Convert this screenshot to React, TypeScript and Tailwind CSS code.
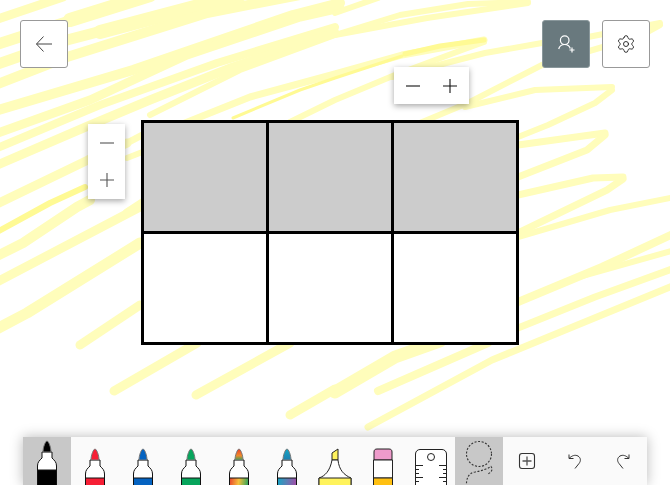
import { Settings } from "lucide-react";

// highlighter scribble behind the table, in page coordinates
const lightInk: [string, number][] = [
  ["M-5 20L63 -3", 9],
  ["M-5 45L150 -5", 11],
  ["M70 20L150 -5", 14],
  ["M-5 65L67 40L240 -5", 11],
  ["M100 32L240 -5", 14],
  ["M-5 85L67 57L207 13L300 -5", 10],
  ["M-5 111L133 70L293 15L340 3", 10],
  ["M-5 134L90 100L187 55L300 17L340 8", 9],
  ["M-5 149L100 105L217 63L335 27", 8],
  ["M-5 166L88 126L150 100L233 67L335 33", 9],
  ["M335 35L400 15L468 4L528 2", 6],
  ["M528 3L427 18L335 35L240 70L150 115", 6],
  ["M335 13L378 -2", 6],
  ["M127 143L150 131", 7],
  ["M127 158L150 149", 6],
  ["M-5 205L88 160L127 143", 9],
  ["M-5 257L23 243L77 207L90 200", 10],
  ["M127 213L150 198", 9],
  ["M-5 283L140 207", 9],
  ["M-5 330L27 313L140 243", 11],
  ["M80 345L140 305", 9],
  ["M114 391L197 343", 9],
  ["M196 395L290 343", 9],
  ["M290 415L335 389", 9],
  ["M335 392L395 357L440 341", 13],
  ["M378 391L488 343", 8],
  ["M368 427L492 360L675 285", 7],
  ["M180 125L250 97L335 74L402 55L484 40", 7],
  ["M484 42L462 50L395 75L335 100L290 122", 6],
  ["M392 77L485 53L542 43L588 37L660 23", 6],
  ["M660 25L640 36L542 65L468 103L415 125", 6],
  ["M465 107L535 90L612 87", 6],
  ["M612 90L595 103L548 125L518 137", 6],
  ["M518 145L605 133", 7],
  ["M605 135L587 150L518 177", 7],
  ["M518 195L593 178L623 177", 7],
  ["M623 179L607 190L518 233", 7],
  ["M518 237L610 210L675 197", 6],
  ["M518 302L602 267L675 233", 8],
  ["M575 278L675 250", 6],
  ["M518 328L595 297L675 268", 7],
];

const darkInk: [string, number][] = [
  ["M-3 232L50 203L85 187", 6],
  ["M233 118L300 90L335 78L402 56", 3],
  ["M484 40L440 46L405 54", 5],
];

function Ink() {
  return (
    <svg className="absolute inset-0" width="670" height="485" fill="none" strokeLinecap="round" strokeLinejoin="round">
      {lightInk.map(([d, w]) => (
        <path key={d} d={d} stroke="#fffdbb" strokeWidth={w} />
      ))}
      {darkInk.map(([d, w]) => (
        <path key={d} d={d} stroke="#fffa94" strokeWidth={w} />
      ))}
    </svg>
  );
}

function PlusIcon() {
  return (
    <svg width="16" height="16" viewBox="0 0 16 16" stroke="currentColor" strokeWidth="1.1">
      <path d="M1 8H15M8 1V15" />
    </svg>
  );
}

function MinusIcon() {
  return (
    <svg width="16" height="16" viewBox="0 0 16 16" stroke="currentColor" strokeWidth="1.1">
      <path d="M1 8H15" />
    </svg>
  );
}

function Marker({ color, fill, tip, raised }: { color: string; fill?: string; tip?: string; raised?: boolean }) {
  return (
    <svg width="48" height="48" viewBox="0 0 48 48" fill="none">
      <g transform={raised ? "translate(0 -8)" : undefined}>
        <path d="M14.5 60V37C14.5 33 16.5 31.5 19 29V23H29V29C31.5 31.5 33.5 33 33.5 37V60Z" fill="#fff" stroke="#111" strokeWidth="1" />
        <path d="M20 23C20 18 22.5 12 24 12C25.5 12 28 18 28 23Z" fill={tip ?? color} stroke="#777" strokeWidth="1" />
        <path d="M14.5 41H33.5V60H14.5Z" fill={fill ?? color} stroke="#111" strokeWidth="1" />
      </g>
    </svg>
  );
}

function Highlighter() {
  return (
    <svg width="48" height="48" viewBox="0 0 48 48" fill="none">
      <path d="M21 23V16L27 12V23Z" fill="#fff35c" stroke="#222" strokeWidth="1" />
      <path d="M8 50V41C14 39 19 34 21 23H27C28 33 33 38 40 41V50Z" fill="#fff" stroke="#222" strokeWidth="1" />
      <path d="M8 41H40V50H8Z" fill="#fff35c" stroke="#222" strokeWidth="1" />
    </svg>
  );
}

function Eraser() {
  return (
    <svg width="48" height="48" viewBox="0 0 48 48" fill="none">
      <path d="M15 23V15C15 13 16 12 18 12H30C32 12 33 13 33 15V23Z" fill="#ee9bcb" stroke="#222" strokeWidth="1" />
      <path d="M14.5 23H33.5V41H14.5Z" fill="#fff" stroke="#222" strokeWidth="1" />
      <path d="M14.5 41H33.5V50H14.5Z" fill="#ffc012" stroke="#222" strokeWidth="1" />
    </svg>
  );
}

function Ruler() {
  return (
    <svg width="48" height="48" viewBox="0 0 48 48" fill="none" stroke="#222" strokeWidth="1">
      <path d="M8.5 50V17C8.5 14 11 12.5 13 12.5H35C37 12.5 39.5 14 39.5 17V50Z" fill="#fff" />
      <circle cx="24" cy="20" r="3.5" />
      <path d="M8.5 28.5H16M8.5 32.5H12M8.5 36.5H12M8.5 40.5H16M8.5 44.5H12M39.5 28.5H32M39.5 32.5H36M39.5 36.5H36M39.5 40.5H32M39.5 44.5H36" />
    </svg>
  );
}

function Lasso() {
  return (
    <svg width="48" height="48" viewBox="0 0 48 48" fill="none" stroke="#333" strokeWidth="1.1" strokeDasharray="2 1.6">
      <circle cx="24" cy="17" r="12.5" />
      <path d="M11.5 50C11 42 13 36 20 35C26 34 32 32 36 29.5C38 32 37 35 33 37" />
    </svg>
  );
}

function UndoIcon({ flip }: { flip?: boolean }) {
  return (
    <svg width="18" height="18" viewBox="0 0 18 18" fill="none" stroke="#333" strokeWidth="1" className={flip ? "-scale-x-100" : ""}>
      <path d="M3 2.5V6.5H7.5M3 6.5C6 3.5 9 2.5 12 4C15 6 15 9 13 11.5L9 16.5" />
    </svg>
  );
}

export default function App() {
  const slot = "w-12 h-12 flex items-center justify-center shrink-0";
  return (
    <div className="relative w-[670px] h-[485px] overflow-hidden bg-white flex flex-col">
      <Ink />

      <div className="relative flex justify-between px-5 pt-5">
        <button className="w-12 h-12 flex items-center justify-center bg-white border border-[#999] rounded-[3px] text-[#444]">
          <svg width="18" height="18" viewBox="0 0 18 18" fill="none" stroke="currentColor" strokeWidth="1">
            <path d="M8.5 1.5L1.5 9L8.5 16.5M1.5 9H17" />
          </svg>
        </button>
        <div className="flex gap-3">
          <button className="w-12 h-12 flex items-center justify-center bg-[#69797e] border border-[#8a989c] rounded-[3px]">
            <svg width="20" height="20" viewBox="0 0 20 20" fill="none" stroke="#fff" strokeWidth="1.2">
              <circle cx="8.7" cy="6.2" r="4.3" />
              <path d="M2.7 15C3.5 12 6 10.5 8.7 10.5C11.5 10.5 13.5 12 14.3 14.5M13.5 16H18.5M16 13.5V18.5" />
            </svg>
          </button>
          <button className="w-12 h-12 flex items-center justify-center bg-white border border-[#999] rounded-[3px] text-[#222]">
            <Settings size={20} strokeWidth={1.1} />
          </button>
        </div>
      </div>

      <div className="relative w-[378px] h-[225px] ml-[141px] mt-[52px] grid grid-cols-3 grid-rows-2 gap-[3px] p-[3px] bg-black">
        <div className="bg-[#ccc]" />
        <div className="bg-[#ccc]" />
        <div className="bg-[#ccc]" />
        <div className="bg-white" />
        <div className="bg-white" />
        <div className="bg-white" />

        <div className="absolute left-[253px] -top-[53px] w-[75px] h-[37px] flex bg-white shadow-[0_2px_6px_rgba(0,0,0,0.35)] text-[#111]">
          <button className="flex-1 flex items-center justify-center"><MinusIcon /></button>
          <button className="flex-1 flex items-center justify-center"><PlusIcon /></button>
        </div>
        <div className="absolute -left-[53px] top-1 w-[37px] h-[75px] flex flex-col bg-white shadow-[0_2px_6px_rgba(0,0,0,0.35)] text-[#555]">
          <button className="flex-1 flex items-center justify-center"><MinusIcon /></button>
          <button className="flex-1 flex items-center justify-center"><PlusIcon /></button>
        </div>
      </div>

      <div className="relative mt-auto ml-[23px] w-[624px] h-12 flex bg-[#fafafa] shadow-[0_0_12px_rgba(0,0,0,0.28)]">
        <svg width="0" height="0" className="absolute">
          <defs>
            <linearGradient id="rainbowTip" x1="0" y1="0" x2="0" y2="1">
              <stop offset="0" stopColor="#e8402a" />
              <stop offset="0.6" stopColor="#f08a2c" />
              <stop offset="1" stopColor="#3f9f5a" />
            </linearGradient>
            <linearGradient id="rainbow" x1="0" y1="0" x2="1" y2="0.15">
              <stop offset="0" stopColor="#e8402a" />
              <stop offset="0.5" stopColor="#f6c03c" />
              <stop offset="1" stopColor="#2fa35a" />
            </linearGradient>
            <linearGradient id="galaxyTip" x1="0" y1="0" x2="0" y2="1">
              <stop offset="0" stopColor="#14a5c4" />
              <stop offset="1" stopColor="#1f7fb0" />
            </linearGradient>
            <linearGradient id="galaxy" x1="0" y1="0" x2="1" y2="0.15">
              <stop offset="0" stopColor="#14a5c4" />
              <stop offset="0.5" stopColor="#5b7fb5" />
              <stop offset="1" stopColor="#a04fa8" />
            </linearGradient>
          </defs>
        </svg>
        <div className={`${slot} bg-[#c8c8c8]`}><Marker color="#000" raised /></div>
        <div className={slot}><Marker color="#f61f35" /></div>
        <div className={slot}><Marker color="#0563c1" /></div>
        <div className={slot}><Marker color="#07a55c" /></div>
        <div className={slot}><Marker color="#e8402a" fill="url(#rainbow)" tip="url(#rainbowTip)" /></div>
        <div className={slot}><Marker color="#14a5c4" fill="url(#galaxy)" tip="url(#galaxyTip)" /></div>
        <div className={slot}><Highlighter /></div>
        <div className={slot}><Eraser /></div>
        <div className={slot}><Ruler /></div>
        <div className={`${slot} bg-[#c8c8c8]`}><Lasso /></div>
        <div className={slot}>
          <svg width="18" height="18" viewBox="0 0 18 18" fill="none">
            <rect x="1.5" y="1.5" width="15" height="15" rx="2.5" stroke="#333" strokeWidth="1.1" />
            <path d="M4.5 9H13.5M9 4.5V13.5" stroke="#555" strokeWidth="1.3" />
          </svg>
        </div>
        <div className={slot}><UndoIcon /></div>
        <div className={slot}><UndoIcon flip /></div>
      </div>
    </div>
  );
}
